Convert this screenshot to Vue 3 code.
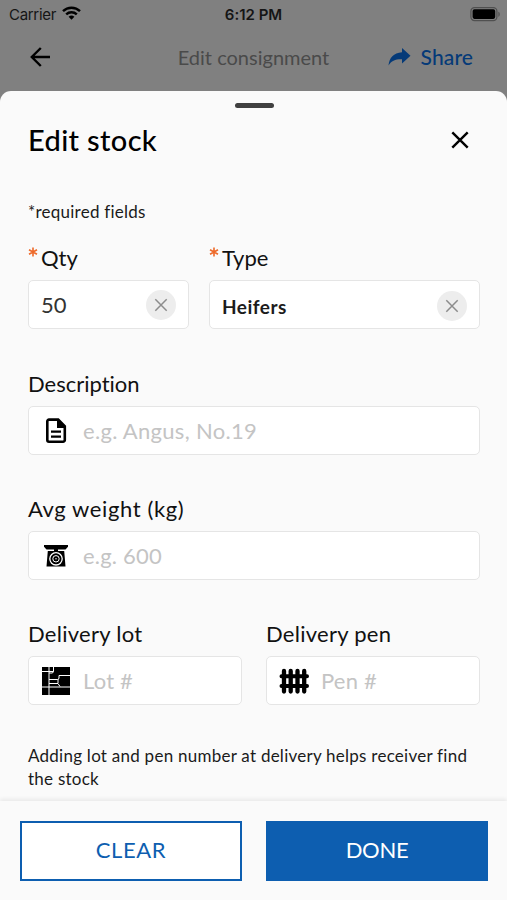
<script setup>
import { ref } from 'vue'

const qty = ref('50')
const stockType = ref('Heifers')
const description = ref('')
const weight = ref('')
const lot = ref('')
const pen = ref('')

function clearAll() {
  for (const field of [qty, stockType, description, weight, lot, pen]) field.value = ''
}
</script>

<template>
  <div class="screen">
    <div class="status">
      <div class="carrier">
        <span>Carrier</span>
        <svg width="19" height="14" viewBox="0 0 19 14" fill="none" stroke="#000" stroke-width="2.4">
          <path d="M1 5.2a12.2 12.2 0 0 1 17 0" />
          <path d="M4.2 8.4a7.6 7.6 0 0 1 10.6 0" />
          <path d="M6.6 10.8a4.2 4.2 0 0 1 5.8 0L9.5 13.7z" fill="#000" stroke="none" />
        </svg>
      </div>
      <span class="time">6:12 PM</span>
      <svg class="battery" width="31" height="15" viewBox="0 0 31 15">
        <rect x=".9" y=".6" width="26" height="13" rx="3.6" fill="none" stroke="#505050" stroke-width="1.2" />
        <rect x="2.6" y="2.3" width="22.6" height="9.6" rx="1.8" fill="#000" />
        <path d="M28.4 4.700v5c1.800-.6 1.800-4.400 0-5z" fill="#505050" />
      </svg>
    </div>

    <header class="nav">
      <svg class="back" width="22" height="20" viewBox="0 0 22 20" fill="none" stroke="#000" stroke-width="2.400">
        <path d="M21 10H3M11.800 1 2.800 10l9 9" />
      </svg>
      <span class="nav-title">Edit consignment</span>
      <div class="share">
        <svg width="23" height="18" viewBox="0 0 23 18">
          <path d="M14 0l8.500 7.800L14 15.400v-4.200C7.500 11 3.500 12.500.5 17.500 1.300 9.800 5.500 4.900 14 4.300z" fill="#053a78" />
        </svg>
        <span>Share</span>
      </div>
    </header>

    <main class="sheet">
      <div class="grabber"></div>
      <div class="heading">
        <h1>Edit stock</h1>
        <svg width="18" height="18" viewBox="0 0 18 18" stroke="#000" stroke-width="2.4">
          <path d="M1.300 1.300l15.400 15.400M16.700 1.300L1.300 16.700" />
        </svg>
      </div>
      <p class="required">*required fields</p>

      <div class="row top">
        <div class="field qty">
          <label><svg class="star" viewBox="0 0 10 10"><path d="M5 .5v9M1 2.700l8 4.600M9 2.700L1 7.300" /></svg>Qty</label>
          <div class="box">
            <input v-model="qty" />
            <button class="wipe" @click="qty = ''">
              <svg viewBox="0 0 14 14"><path d="M1.300 1.300l11.400 11.400M12.700 1.300L1.300 12.700" /></svg>
            </button>
          </div>
        </div>
        <div class="field type">
          <label><svg class="star" viewBox="0 0 10 10"><path d="M5 .5v9M1 2.700l8 4.600M9 2.700L1 7.300" /></svg>Type</label>
          <div class="box select">
            <input v-model="stockType" />
            <button class="wipe" @click="stockType = ''">
              <svg viewBox="0 0 14 14"><path d="M1.300 1.300l11.400 11.400M12.700 1.300L1.300 12.700" /></svg>
            </button>
          </div>
        </div>
      </div>

      <div class="field">
        <label class="l-desc">Description</label>
        <div class="box">
          <svg class="icon" width="30" height="30" viewBox="0 0 30 30">
            <path d="M8 3.600h9.200l6.600 6.800V24a1.700 1.700 0 0 1-1.700 1.700H8A1.700 1.700 0 0 1 6.300 24V5.300A1.700 1.700 0 0 1 8 3.600z" fill="none" stroke="#000" stroke-width="2.600" />
            <path d="M16 3.500h2l6 6.500v2h-8z" />
            <path d="M10 15.600h10M10 20.600h10" stroke="#000" stroke-width="2.300" />
          </svg>
          <input v-model="description" class="p-desc" placeholder="e.g. Angus, No.19" />
        </div>
      </div>

      <div class="field">
        <label class="l-weight">Avg weight (kg)</label>
        <div class="box">
          <svg class="icon" width="30" height="30" viewBox="0 0 30 30">
            <path d="M3 4h24v1.800l-2.500 2.700h-19L3 5.800z" />
            <path d="M13 8h4v2h6.200l1.300 15.500h-19L6.800 10H13z" />
            <circle cx="15" cy="17.800" r="6.200" fill="none" stroke="#fff" stroke-width="1.300" />
            <circle cx="15" cy="17.800" r="3.200" fill="none" stroke="#fff" stroke-width="1" />
            <circle cx="15" cy="17.800" r=".7" fill="#fff" />
          </svg>
          <input v-model="weight" class="p-weight" placeholder="e.g. 600" />
        </div>
      </div>

      <div class="row pair">
        <div class="field">
          <label class="l-lot">Delivery lot</label>
          <div class="box">
            <svg class="icon" width="30" height="30" viewBox="0 0 30 30">
              <path d="M1 1h28v28H1z" />
              <path d="M1 5.500h11.500M8 1v28M12.500 1v4.500l-1 1.500H8M8 13.500h8.500l1.500-1V9.500h11M17 13v4M8 17.500h9l2 3M1 21h28" fill="none" stroke="#fff" stroke-width="1" />
            </svg>
            <input v-model="lot" class="p-lot" placeholder="Lot #" />
          </div>
        </div>
        <div class="field">
          <label class="l-pen">Delivery pen</label>
          <div class="box">
            <svg class="icon" width="30" height="30" viewBox="0 0 30 30" stroke="#000" stroke-linecap="round">
              <path d="M5 5v20.500M11.700 5v20.500M18.500 5v20.500M25.200 5v20.500" stroke-width="4.300" />
              <path d="M2.500 10.300H28M2.500 20H28" stroke-width="4" />
            </svg>
            <input v-model="pen" class="p-pen" placeholder="Pen #" />
          </div>
        </div>
      </div>

      <p class="note">Adding lot and pen number at delivery helps receiver find the stock</p>
    </main>

    <footer class="actions">
      <button class="clear" @click="clearAll">CLEAR</button>
      <button class="done">DONE</button>
    </footer>
  </div>
</template>

<style>
body {
  margin: 0;
  background: #808080;
}
</style>

<style scoped>
* {
  box-sizing: border-box;
}
.screen {
  width: 507px;
  height: 900px;
  display: flex;
  flex-direction: column;
  overflow: hidden;
  background: #808080;
  color: #111;
  font-family: Lato, "Noto Sans", sans-serif;
  font-variant-ligatures: none;
}
svg {
  display: block;
  flex: none;
}
.status {
  height: 28px;
  flex: none;
  display: grid;
  grid-template-columns: 1fr auto 1fr;
  align-items: center;
  padding: 0 6px 0 9px;
  font-family: Inter, sans-serif;
  font-size: 15px;
  color: #151515;
}
.carrier {
  display: flex;
  align-items: center;
  gap: 6px;
  letter-spacing: -0.3px;
}
.carrier svg {
  margin-top: -2px;
}
.time {
  font-weight: 600;
  padding-right: 3px;
}
.battery {
  justify-self: end;
}
.nav {
  height: 63px;
  flex: none;
  display: grid;
  grid-template-columns: 1fr auto 1fr;
  align-items: center;
  padding: 0 34px 5px 29px;
  font-size: 21px;
}
.nav-title {
  color: #4a4a4a;
  font-size: 20px;
  padding: 0 0 1px 5px;
}
.share {
  justify-self: end;
  display: flex;
  align-items: center;
  gap: 10px;
  font-weight: 500;
  color: #053a78;
  letter-spacing: 0.1px;
}
.share span {
  padding-bottom: 2px;
}
.sheet {
  flex: 1;
  min-height: 0;
  display: flex;
  flex-direction: column;
  padding: 12px 27px 0 28px;
  background: #fafafa;
  border-radius: 11px 11px 0 0;
}
.grabber {
  width: 39px;
  height: 5px;
  flex: none;
  border-radius: 3px;
  background: #404040;
  align-self: center;
}
.heading {
  display: flex;
  align-items: center;
  justify-content: space-between;
  height: 64px;
  padding-right: 11px;
}
h1 {
  margin: 0;
  padding-bottom: 2px;
  font-size: 29px;
  font-weight: 500;
  letter-spacing: 0.35px;
  color: #000;
}
p {
  margin: 0;
  color: #1b1b1b;
  font-size: 17px;
  letter-spacing: 0.25px;
}
.required {
  height: 23px;
  margin-top: 28px;
  line-height: 23px;
}
.row {
  display: flex;
}
.top {
  gap: 20px;
}
.pair {
  gap: 24px;
}
.pair .field {
  flex: 1;
}
.qty {
  width: 161px;
}
.type {
  flex: 1;
}
.field {
  margin-bottom: 39px;
}
.required + .row .field {
  margin-top: 20px;
  margin-bottom: 40px;
}
label {
  display: flex;
  height: 30px;
  margin-bottom: 7px;
  line-height: 29px;
  font-size: 22px;
  color: #111;
}
.l-weight {
  letter-spacing: 0.6px;
}
.l-lot,
.l-pen {
  letter-spacing: 0.27px;
}
.star {
  width: 10px;
  height: 10px;
  margin: 4px 3px 0 0;
  fill: none;
  stroke: #ee6a2a;
  stroke-width: 1.6;
}
.box {
  display: flex;
  align-items: center;
  gap: 12px;
  height: 49px;
  padding: 0 12px;
  border: 1.5px solid #e5e5e5;
  border-radius: 5px;
  background: #fff;
}
input {
  flex: 1;
  min-width: 0;
  width: 0;
  padding: 0;
  border: 0;
  outline: 0;
  background: none;
  font: inherit;
  font-size: 22px;
  color: #333;
}
input::placeholder {
  color: #c4c4c4;
  opacity: 1;
}
.p-desc {
  letter-spacing: 0.3px;
}
.p-weight,
.p-lot,
.p-pen {
  letter-spacing: 0.2px;
}
.select input {
  font-size: 19px;
  font-weight: 700;
  letter-spacing: 0.5px;
  color: #1c1c1c;
  padding-top: 3px;
}
.select .wipe {
  margin-top: 2px;
}
.wipe {
  display: grid;
  place-items: center;
  width: 30px;
  height: 30px;
  flex: none;
  padding: 0;
  border: 0;
  border-radius: 50%;
  background: #ededed;
}
.wipe svg {
  width: 14px;
  height: 14px;
  stroke: #8c8c8c;
  stroke-width: 1.5;
}
.note {
  line-height: 23px;
}
.actions {
  height: 99px;
  flex: none;
  display: flex;
  gap: 24px;
  padding: 20px 19px 19px 20px;
  background: #fafafa;
  box-shadow: 0 -2px 4px rgba(0, 0, 0, 0.07);
}
.actions button {
  flex: 1;
  padding: 0 0 3px;
  font: inherit;
  font-size: 22px;
  border: 2px solid #0d5eb0;
}
.clear {
  background: #fff;
  color: #0d5eb0;
  letter-spacing: 0.6px;
}
.done {
  background: #0d5eb0;
  color: #fff;
  letter-spacing: -0.3px;
}
</style>
